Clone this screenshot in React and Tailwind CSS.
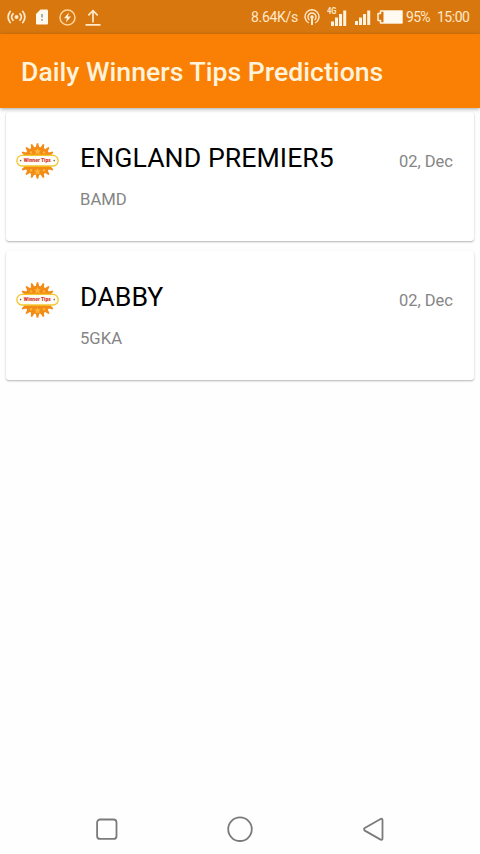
const TIPS = [
  { id: 1, title: 'ENGLAND PREMIER5', code: 'BAMD', date: '02, Dec' },
  { id: 2, title: 'DABBY', code: '5GKA', date: '02, Dec' },
]

// Outline of the toothed seal: two outer and two inner corners per tooth
const TEETH = 18
const SEAL_POINTS = Array.from({ length: TEETH }, (_, i) => {
  const step = (Math.PI * 2) / TEETH
  const mid = step * i - Math.PI / 2
  return [
    [14.2, -0.34],
    [17.8, -0.12],
    [17.8, 0.12],
    [14.2, 0.34],
  ].map(([r, t]) => {
    const a = mid + step * t
    return `${(21.5 + r * Math.cos(a)).toFixed(2)},${(18 + r * Math.sin(a)).toFixed(2)}`
  }).join(' ')
}).join(' ')

function WinnerSeal() {
  return (
    <svg width="43" height="37" viewBox="0 0 43 37" className="block">
      <polygon points={SEAL_POINTS} fill="#f28c16" />
      <g fill="#ffb638">
        <path d="M21.5 5l1 2.2 2.4.2-1.8 1.7.6 2.4-2.2-1.2-2.2 1.2.6-2.4-1.8-1.7 2.4-.2z" />
        <path d="M21.5 25.2l1 2.2 2.4.2-1.8 1.7.6 2.4-2.2-1.2-2.2 1.2.6-2.4-1.8-1.7 2.4-.2z" />
        <circle cx="15" cy="9.5" r="1.2" />
        <circle cx="28" cy="9.5" r="1.2" />
        <circle cx="15" cy="27.3" r="1.2" />
        <circle cx="28" cy="27.3" r="1.2" />
      </g>
      <rect x="0.9" y="12.4" width="41.2" height="10.6" rx="5" fill="#fffdf5" stroke="#f3c62c" strokeWidth="1.3" />
      <circle cx="4.6" cy="17.6" r="0.8" fill="#7a5848" />
      <circle cx="38.2" cy="17.6" r="0.8" fill="#7a5848" />
      <text x="21.3" y="19.1" textAnchor="middle" textLength="27" lengthAdjust="spacingAndGlyphs" fontSize="4.5" fontWeight="900" fontFamily="Roboto, sans-serif" fill="#d5372b">
        Winner Tips
      </text>
    </svg>
  )
}

function StatusBar() {
  return (
    <div className="h-[34px] shrink-0 bg-[#d9770f] flex items-center text-[#ffe9cb] text-[14px]">
      {/* Hotspot */}
      <svg width="20" height="16" viewBox="0 0 20 16" className="ml-[7px]" fill="none" stroke="currentColor" strokeWidth="1.8" strokeLinecap="round">
        <circle cx="9.5" cy="8" r="2" fill="currentColor" stroke="none" />
        <path d="M6 4.8a4.6 4.6 0 0 0 0 6.4M13 4.8a4.6 4.6 0 0 1 0 6.4M3.2 2.5a8.4 8.4 0 0 0 0 11M15.8 2.5a8.4 8.4 0 0 1 0 11" />
      </svg>
      {/* SIM card */}
      <svg width="12" height="16" viewBox="0 0 12 16" className="ml-[9px]">
        <path d="M4.5 0.5H11a1 1 0 0 1 1 1v13a1 1 0 0 1-1 1H1a1 1 0 0 1-1-1V5z" fill="#fff8ec" />
        <path d="M6 5v3.5M6 10v1.7" stroke="#77999a" strokeWidth="1.4" />
      </svg>
      {/* Charging */}
      <svg width="17" height="17" viewBox="0 0 17 17" className="ml-[11px]">
        <circle cx="8.5" cy="8.5" r="7.5" fill="none" stroke="#ffd49c" strokeWidth="1.5" />
        <path d="M9.9 3.4L5 9.2h3L6.9 13.6 12 7.6H8.9z" fill="#fff3df" />
      </svg>
      {/* Upload */}
      <svg width="16" height="17" viewBox="0 0 16 17" className="ml-[9px]" fill="none" stroke="currentColor" strokeWidth="1.7">
        <path d="M8 13.5V1.8M3.3 6.3L8 1.6l4.7 4.7M0.5 15.8h15" />
      </svg>

      <div className="ml-auto mr-[11px] flex items-center">
        <span className="w-[46px] whitespace-nowrap tracking-[-0.3px]">8.64K/s</span>
        <svg width="16" height="17" viewBox="0 0 16 17" className="ml-[7px]" fill="none" stroke="currentColor" strokeWidth="1.4">
          <path d="M4.8 14A7 7 0 1 1 11.2 14M5.4 11a4 4 0 1 1 5.2 0" />
          <circle cx="8" cy="8" r="1.8" fill="currentColor" stroke="none" />
          <path d="M8 8.5V16" strokeWidth="2" />
        </svg>
        <svg width="20" height="20" viewBox="0 0 20 20" className="ml-[7px] -mt-[3px]">
          <text x="0" y="8" fontSize="9.5" fontWeight="700" textLength="9.5" lengthAdjust="spacingAndGlyphs" fontFamily="Roboto, sans-serif" fill="currentColor">4G</text>
          <path d="M4 15.5h3V20H4zM8 11.5h3V20H8zM12 8h3V20h-3zM16.2 4.5h3V20h-3z" fill="#fff3df" />
        </svg>
        <svg width="16" height="16" viewBox="0 0 16 16" className="ml-2">
          <path d="M0 12h3v4H0zM4 8.5h3V16H4zM8 5h3v11H8zM12.2 1.5h3V16h-3z" fill="#fff3df" />
        </svg>
        <svg width="26" height="14" viewBox="0 0 26 14" className="ml-1.5">
          <path d="M3.5 1H25v12H3.5V10.5H1V3.5h2.5z" fill="none" stroke="#fff3df" strokeWidth="1.5" strokeLinejoin="round" />
          <path d="M6.5 1H25v12H6.5z" fill="#fffaf0" />
        </svg>
        <span className="ml-[3px] w-6 whitespace-nowrap tracking-[-0.7px]">95%</span>
        <span className="ml-[7px] w-8 whitespace-nowrap tracking-[-0.5px]">15:00</span>
      </div>
    </div>
  )
}

function TipCard({ tip }) {
  return (
    <article className="h-[129px] rounded-[3px] bg-white pl-[10px] pr-[21px] flex items-start shadow-[0_1px_2px_rgba(0,0,0,0.3)]">
      <div className="mt-[31px] w-[43px] shrink-0">
        <WinnerSeal />
      </div>
      <div className="ml-[21px] mt-[30px] flex-1">
        <h2 className="text-[26.67px] leading-8 tracking-[0.06px] text-black whitespace-nowrap">{tip.title}</h2>
        <p className="mt-4 text-[16.67px] leading-5 text-[#858585]">{tip.code}</p>
      </div>
      <time className="mt-10 text-[16.5px] leading-5 text-[#858585] whitespace-nowrap">{tip.date}</time>
    </article>
  )
}

function NavBar() {
  return (
    <nav className="h-[50px] shrink-0 flex items-center justify-center gap-[107px] text-[#7b7b7b]">
      <svg width="26" height="26" viewBox="0 0 26 26" fill="none" stroke="currentColor" strokeWidth="1.8">
        <rect x="3.1" y="3.5" width="19.4" height="19.4" rx="3" />
      </svg>
      <svg width="26" height="26" viewBox="0 0 26 26" fill="none" stroke="currentColor" strokeWidth="1.8">
        <circle cx="13" cy="13.2" r="11.8" />
      </svg>
      <svg width="26" height="26" viewBox="0 0 26 26" fill="none" stroke="currentColor" strokeWidth="1.8" strokeLinejoin="round">
        <path d="M20.6 3L4.8 12a1.5 1.5 0 0 0 0 2.6l15.8 9a1.2 1.2 0 0 0 1.9-1V4a1.2 1.2 0 0 0-1.9-1z" />
      </svg>
    </nav>
  )
}

export default function App() {
  return (
    <div className="h-screen w-full flex flex-col overflow-hidden bg-[#fefefe] font-['Roboto',sans-serif]">
      <StatusBar />
      <header className="relative z-10 h-[74px] shrink-0 bg-[#fa8005] pl-[21px] pt-[2px] flex items-center shadow-[0_1px_4px_rgba(0,0,0,0.35)]">
        <h1 className="text-[26.67px] leading-8 font-medium text-[#fff3dc] whitespace-nowrap">Daily Winners Tips Predictions</h1>
      </header>
      <main className="flex-1 px-[6px] pt-1 flex flex-col gap-[10px]">
        {TIPS.map((tip) => (
          <TipCard key={tip.id} tip={tip} />
        ))}
      </main>
      <NavBar />
    </div>
  )
}
